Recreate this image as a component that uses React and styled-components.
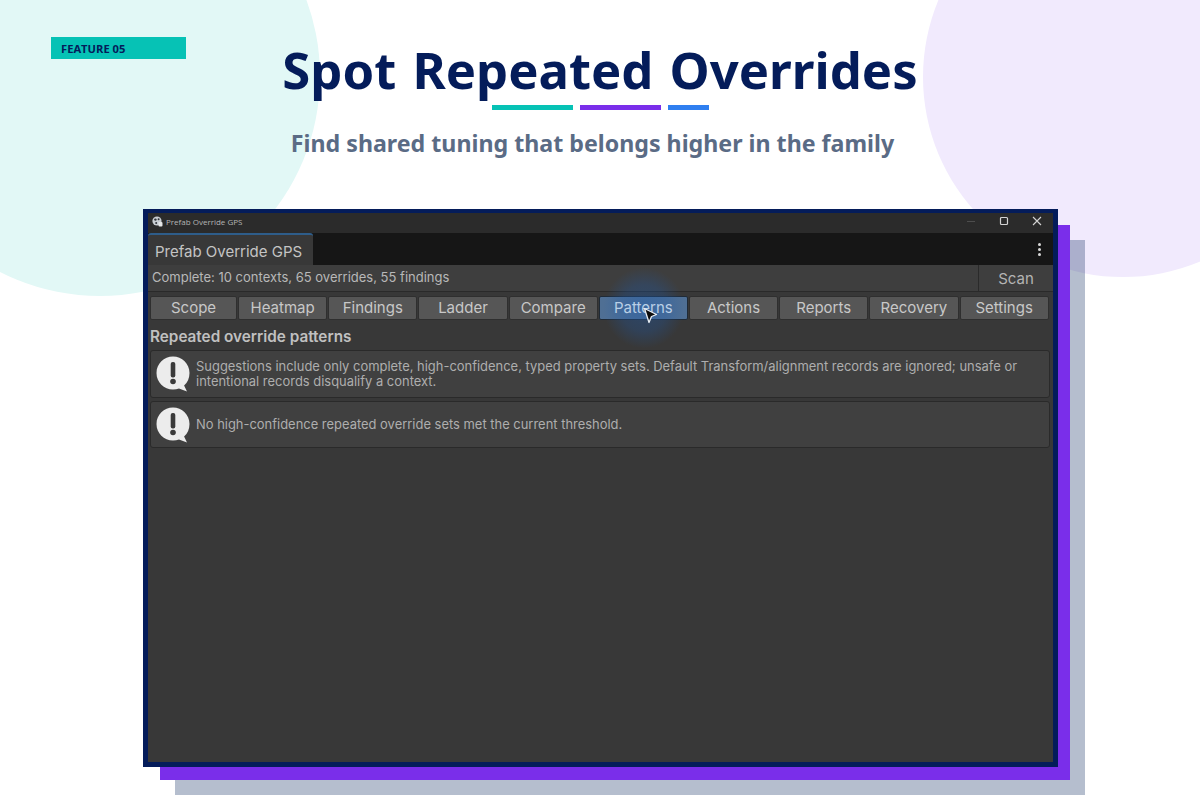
import React from 'react'
import styled, { createGlobalStyle } from 'styled-components'

const TABS = ['Scope', 'Heatmap', 'Findings', 'Ladder', 'Compare', 'Patterns', 'Actions', 'Reports', 'Recovery', 'Settings']

const App = () => (
  <Page>
    <GlobalStyle />
    <Circle $left={-120} $top={-144} $size={440} $color='#e2f8f6' />
    <Circle $left={923} $top={-123} $size={400} $color='#f1eafd' />
    <Header>
      <BadgeCell>
        <Badge>FEATURE 05</Badge>
      </BadgeCell>
      <Heading>
        <Title>Spot Repeated Overrides</Title>
        <Underlines>
          <Underline $width={81} $color='#06c2b5' />
          <Underline $width={81} $color='#7a2eea' />
          <Underline $width={41} $color='#2f7ff0' />
        </Underlines>
        <Subtitle>Find shared tuning that belongs higher in the family</Subtitle>
      </Heading>
    </Header>
    <Stage>
      <Shadow $offsetX={32} $offsetY={31} $color='rgba(10, 40, 92, 0.3)' />
      <Shadow $offsetX={17} $offsetY={16} $color='#7a2eea' />
      <Window>
        <TitleBar>
          <TitleName>
            <AppIcon />
            Prefab Override GPS
          </TitleName>
          <WindowControls>
            <MinimizeIcon />
            <MaximizeIcon />
            <CloseIcon />
          </WindowControls>
        </TitleBar>
        <DockStrip>
          <DockTab>Prefab Override GPS</DockTab>
          <MenuDots>
            <Dot />
            <Dot />
            <Dot />
          </MenuDots>
        </DockStrip>
        <StatusRow>
          <StatusText>Complete: 10 contexts, 65 overrides, 55 findings</StatusText>
          <ScanButton>Scan</ScanButton>
        </StatusRow>
        <TabRow>
          {TABS.map((tab) => (
            <Tab key={tab} $active={tab === 'Patterns'}>
              {tab}
              {tab === 'Patterns' && <Pointer />}
            </Tab>
          ))}
        </TabRow>
        <Content>
          <SectionTitle>Repeated override patterns</SectionTitle>
          <HelpBox $height={48}>
            <WarnIcon />
            <HelpText>
              Suggestions include only complete, high-confidence, typed property sets. Default Transform/alignment records are ignored; unsafe or intentional records disqualify a context.
            </HelpText>
          </HelpBox>
          <HelpBox $height={47}>
            <WarnIcon />
            <HelpText>No high-confidence repeated override sets met the current threshold.</HelpText>
          </HelpBox>
        </Content>
      </Window>
    </Stage>
  </Page>
)

const AppIcon = () => (
  <svg width='11' height='11' viewBox='0 0 11 11'>
    <circle cx='5' cy='5' r='4.6' fill='#c9ced3' />
    <circle cx='3.4' cy='3.6' r='1.2' fill='#30353a' />
    <circle cx='6.6' cy='3.2' r='1' fill='#30353a' />
    <circle cx='4.2' cy='7' r='1' fill='#30353a' />
    <rect x='6.5' y='6' width='4' height='4.5' rx='1' fill='#e4e6e8' />
  </svg>
)

const MinimizeIcon = () => (
  <ControlSlot>
    <svg width='10' height='10' viewBox='0 0 10 10'>
      <path d='M1 5.5H9' stroke='#4d4d4d' strokeWidth='1' />
    </svg>
  </ControlSlot>
)

const MaximizeIcon = () => (
  <ControlSlot>
    <svg width='10' height='10' viewBox='0 0 10 10'>
      <rect x='1.5' y='1.5' width='7' height='7' rx='1' fill='none' stroke='#d4d4d4' strokeWidth='1.2' />
    </svg>
  </ControlSlot>
)

const CloseIcon = () => (
  <ControlSlot>
    <svg width='10' height='10' viewBox='0 0 10 10'>
      <path d='M1 1L9 9M9 1L1 9' stroke='#d4d4d4' strokeWidth='1.1' />
    </svg>
  </ControlSlot>
)

const WarnIcon = () => (
  <WarnSvg width='34' height='36' viewBox='0 0 34 36'>
    <path d='M17 .5C8 .5.5 7.7.5 17S8 33.5 17 33.5c2.2 0 4.2-.4 6-1.1l8 3.2-2.9-6.2C31.7 26.4 33.5 22 33.5 17 33.5 7.7 26 .5 17 .5Z' fill='#ececec' />
    <rect x='14.7' y='6' width='4.6' height='15.5' rx='2' fill='#3a3a3a' />
    <circle cx='17' cy='25.5' r='2.8' fill='#3a3a3a' />
  </WarnSvg>
)

const Pointer = () => (
  <PointerSvg width='15' height='17' viewBox='0 0 15 17'>
    <path d='M1.5 1.5L13.5 7.5L8.5 9.5L6 15.5Z' fill='#0c0c0c' stroke='#e8eef5' strokeWidth='1.3' strokeLinejoin='round' />
  </PointerSvg>
)

const GlobalStyle = createGlobalStyle`
  html, body {
    margin: 0;
    padding: 0;
    background: #fff;
  }
  * {
    box-sizing: border-box;
  }
`

const Page = styled.div`
  width: 1200px;
  height: 800px;
  position: relative;
  overflow: hidden;
  background: #fff;
  font-family: 'Inter', sans-serif;
`
const Circle = styled.div`
  position: absolute;
  left: ${(p) => p.$left}px;
  top: ${(p) => p.$top}px;
  width: ${(p) => p.$size}px;
  height: ${(p) => p.$size}px;
  border-radius: 50%;
  background: ${(p) => p.$color};
`
const Header = styled.header`
  position: relative;
  display: grid;
  grid-template-columns: 1fr auto 1fr;
  height: 209px;
`
const BadgeCell = styled.div`
  padding: 37px 0 0 51px;
`
const Badge = styled.div`
  width: 135px;
  height: 22px;
  padding-left: 10px;
  background: #06c2b5;
  color: #041c5a;
  font-family: 'Open Sans', sans-serif;
  font-size: 11.2px;
  font-weight: 700;
  line-height: 23px;
`
const Heading = styled.div`
  display: flex;
  flex-direction: column;
  align-items: center;
  padding-top: 34px;
`
const Title = styled.h1`
  margin: 0;
  color: #041c5a;
  font-family: 'Noto Sans', sans-serif;
  font-size: 50.8px;
  font-weight: 700;
  line-height: 71px;
  word-spacing: 3px;
  white-space: nowrap;
`
const Underlines = styled.div`
  display: flex;
  gap: 7px;
  margin-left: 2px;
`
const Underline = styled.div`
  width: ${(p) => p.$width}px;
  height: 5px;
  background: ${(p) => p.$color};
`
const Subtitle = styled.p`
  margin: 17px 15px 0 0;
  color: #5a6b85;
  font-family: 'Noto Sans', sans-serif;
  font-size: 23.2px;
  font-weight: 700;
  line-height: 33px;
  white-space: nowrap;
`
const Stage = styled.div`
  position: relative;
  width: 915px;
  height: 558px;
  margin-left: 143px;
`
const Shadow = styled.div`
  position: absolute;
  left: ${(p) => p.$offsetX}px;
  top: ${(p) => p.$offsetY}px;
  width: 910px;
  height: 555px;
  background: ${(p) => p.$color};
`
const Window = styled.div`
  position: relative;
  display: flex;
  flex-direction: column;
  height: 100%;
  border: solid #041c5a;
  border-width: 4px 5px 5px 5px;
  background: #383838;
  overflow: hidden;
`
const TitleBar = styled.div`
  display: flex;
  align-items: center;
  justify-content: space-between;
  height: 20px;
  padding: 0 0 4px 4px;
  background: #2b2b2b;
`
const TitleName = styled.div`
  display: flex;
  align-items: center;
  gap: 3px;
  color: #b4b4b4;
  font-family: 'Open Sans', sans-serif;
  font-size: 8px;
`
const WindowControls = styled.div`
  display: flex;
`
const ControlSlot = styled.div`
  display: flex;
  align-items: center;
  justify-content: center;
  width: 33px;
  height: 16px;
`
const DockStrip = styled.div`
  display: flex;
  align-items: stretch;
  justify-content: space-between;
  height: 32px;
  background: #161616;
`
const DockTab = styled.div`
  width: 165px;
  height: 32px;
  padding: 4px 0 0 7px;
  border-top: 2px solid #2e5d8a;
  border-radius: 3px 3px 0 0;
  background: #383838;
  color: #c4c4c4;
  font-size: 15px;
  line-height: 26px;
`
const MenuDots = styled.div`
  display: flex;
  flex-direction: column;
  align-items: center;
  justify-content: center;
  gap: 2px;
  width: 28px;
`
const Dot = styled.span`
  width: 3px;
  height: 3px;
  border-radius: 50%;
  background: #d8d8d8;
`
const StatusRow = styled.div`
  display: flex;
  justify-content: space-between;
  height: 27px;
  border-bottom: 1px solid #2a2a2a;
  background: #3e3e3e;
`
const StatusText = styled.div`
  padding: 4px 0 0 4px;
  color: #b8b8b8;
  font-size: 13px;
  line-height: 16px;
`
const ScanButton = styled.div`
  width: 75px;
  border-left: 1px solid #2a2a2a;
  background: #3e3e3e;
  color: #b4b4b4;
  font-size: 15px;
  line-height: 27px;
  text-align: center;
`
const TabRow = styled.div`
  display: grid;
  grid-template-columns: 87px repeat(9, 89.2px);
  gap: 1px;
  height: 23px;
  margin: 4px 0 0 2px;
`
const Tab = styled.div`
  position: relative;
  border: 1px solid ${(p) => (p.$active ? '#1f2a36' : '#2f2f2f')};
  border-radius: 2px;
  background: ${(p) => (p.$active ? '#4f6f94' : '#565656')};
  color: ${(p) => (p.$active ? '#b9cfe6' : '#c8c8c8')};
  font-size: 15px;
  line-height: 22px;
  text-align: center;
  ${(p) => p.$active && `
    z-index: 1;
    &::before {
      content: '';
      position: absolute;
      left: -6px;
      top: -34px;
      width: 100px;
      height: 90px;
      z-index: -1;
      background: radial-gradient(circle, rgba(30, 90, 170, 0.42) 0, rgba(30, 90, 170, 0.28) 35%, rgba(30, 90, 170, 0) 60%);
    }
  `}
`
const PointerSvg = styled.svg`
  position: absolute;
  left: 43px;
  top: 10px;
`
const Content = styled.div`
  display: flex;
  flex-direction: column;
  gap: 3px;
  padding: 8px 3px 0 2px;
`
const SectionTitle = styled.h2`
  margin: 0;
  color: #c0c0c0;
  font-size: 15.3px;
  font-weight: 600;
  line-height: 20px;
`
const HelpBox = styled.div`
  display: flex;
  align-items: center;
  gap: 6px;
  height: ${(p) => p.$height}px;
  padding: 0 8px 0 5px;
  border: 1px solid #2a2a2a;
  border-radius: 3px;
  background: #404040;
`
const WarnSvg = styled.svg`
  flex: none;
`
const HelpText = styled.div`
  color: #aeaeae;
  font-size: 12.94px;
  line-height: 15.5px;
`

export default App
